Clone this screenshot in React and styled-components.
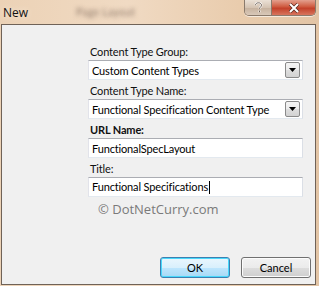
import React from "react";
import styled, { createGlobalStyle } from "styled-components";

const Global = createGlobalStyle`
  html, body { margin: 0; padding: 0; }
  body { font-family: Lato, "Noto Sans", sans-serif; background: #e8cdb0; }
`;

const Window = styled.div`
  width: 319px;
  height: 286px;
  box-sizing: border-box;
  display: flex;
  flex-direction: column;
  background: linear-gradient(90deg, #ecd2b6 0%, #f0dac3 40%, #e9ccad 75%, #e2c4a5 100%);
  padding: 0 3px 1px 1px;
`;

const TitleBar = styled.div`
  height: 24px;
  flex: none;
  display: flex;
  align-items: flex-start;
  position: relative;
`;

const Caption = styled.span`
  font-family: "Open Sans", sans-serif;
  font-size: 12px;
  color: #111;
  margin: 4px 0 0 2px;
  text-shadow: 0 0 6px rgba(255, 245, 230, 0.9);
`;

const Ghost = styled.span`
  font-size: 11px;
  margin: 5px 0 0 48px;
  color: transparent;
  text-shadow: 0 0 4px rgba(90, 70, 60, 0.6);
`;

const Controls = styled.div`
  position: absolute;
  top: 0;
  right: 0;
  display: flex;
  border: 1px solid #8a7a6c;
  border-top: none;
  border-radius: 0 0 5px 5px;
  overflow: hidden;
  box-shadow: 0 1px 0 rgba(255, 255, 255, 0.6);
`;

const CtrlButton = styled.div`
  width: ${({ w }) => w}px;
  height: 15px;
  display: flex;
  align-items: center;
  justify-content: center;
  background: ${({ danger }) =>
    danger
      ? "linear-gradient(180deg, #e3a08e 0%, #cf5a3f 45%, #c3412a 55%, #d7755d 100%)"
      : "linear-gradient(180deg, #ebe1d6 0%, #d5c4b3 50%, #c7b3a0 55%, #d9c8b8 100%)"};
  & + & {
    border-left: 1px solid #8a7a6c;
  }
`;

const Client = styled.div`
  flex: 1;
  border: 1px solid #6f6257;
  background: #f0f0f0;
  display: flex;
  flex-direction: column;
  padding: 19px 4px 6px 86px;
`;

const Form = styled.div`
  display: flex;
  flex-direction: column;
  width: 215px;
`;

const Label = styled.div`
  font-size: 11px;
  letter-spacing: -0.15px;
  color: #111;
  padding-left: 2px;
  height: 16px;
  line-height: 16px;
  font-weight: ${({ bold }) => (bold ? 700 : 400)};
`;

const Field = styled.div`
  height: 20px;
  box-sizing: border-box;
  border: 1px solid;
  border-color: #abadb3 #dbdfe6 #e3e9ef #e2e3ea;
  background: #fff;
  display: flex;
  align-items: center;
  padding: 0 2px 0 3px;
  font-size: 11px;
  letter-spacing: -0.15px;
  color: #000;
  margin-bottom: ${({ last }) => (last ? 0 : 3)}px;
`;

const FieldText = styled.span`
  flex: 1;
  white-space: nowrap;
`;

const Caret = styled.span`
  display: inline-block;
  width: 1px;
  height: 13px;
  background: #000;
  vertical-align: middle;
  margin-left: 1px;
`;

const DropButton = styled.div`
  width: 15px;
  height: 16px;
  box-sizing: border-box;
  border: 1px solid #8a8a8a;
  border-radius: 2px;
  background: linear-gradient(180deg, #f4f4f4 0%, #ececec 50%, #dedede 51%, #d2d2d2 100%);
  display: flex;
  align-items: center;
  justify-content: center;
`;

const Watermark = styled.div`
  font-size: 13px;
  color: #7a7a7a;
  margin: 3px 0 0 10px;
  font-family: "Open Sans", sans-serif;
`;

const Footer = styled.div`
  margin-top: auto;
  display: flex;
  justify-content: flex-end;
  gap: 11px;
  margin-left: -86px;
`;

const Button = styled.button`
  width: 70px;
  height: 21px;
  font-family: Lato, sans-serif;
  font-size: 11px;
  color: #000;
  padding: 0;
  border-radius: 3px;
  border: 1px solid ${({ primary }) => (primary ? "#3c7fb1" : "#707070")};
  background: ${({ primary }) =>
    primary
      ? "linear-gradient(180deg, #eaf6fd 0%, #d9f0fc 50%, #bee6fd 51%, #a7d9f5 100%)"
      : "linear-gradient(180deg, #f2f2f2 0%, #ebebeb 50%, #dddddd 51%, #cfcfcf 100%)"};
  box-shadow: inset 0 0 0 1px ${({ primary }) => (primary ? "#48d8fb" : "#fcfcfc")};
`;

const Arrow = () => (
  <svg width="7" height="4" viewBox="0 0 7 4">
    <path d="M0 0h7L3.5 4z" fill="#000" />
  </svg>
);

const Select = ({ children }) => (
  <Field>
    <FieldText>{children}</FieldText>
    <DropButton>
      <Arrow />
    </DropButton>
  </Field>
);

export default function App() {
  return (
    <>
      <Global />
      <Window>
        <TitleBar>
          <Caption>New</Caption>
          <Ghost>Page Layout</Ghost>
          <Controls>
            <CtrlButton w={26}>
              <svg width="9" height="11" viewBox="0 0 9 11">
                <path
                  d="M1.5 3.2C1.5 1.6 2.8 0.8 4.5 0.8s3 0.9 3 2.4c0 1.6-2 2-2 3.6M5.5 8.6v1.6"
                  stroke="#fff"
                  strokeWidth="2"
                  fill="none"
                />
                <path
                  d="M1.5 3.2C1.5 1.6 2.8 0.8 4.5 0.8s3 0.9 3 2.4c0 1.6-2 2-2 3.6M5.5 8.6v1.6"
                  stroke="#6d5f54"
                  strokeWidth="1"
                  fill="none"
                />
              </svg>
            </CtrlButton>
            <CtrlButton w={43} danger>
              <svg width="12" height="10" viewBox="0 0 12 10">
                <path d="M2 1l8 8M10 1L2 9" stroke="#5a2a20" strokeWidth="3.4" />
                <path d="M2 1l8 8M10 1L2 9" stroke="#fff" strokeWidth="2" />
              </svg>
            </CtrlButton>
          </Controls>
        </TitleBar>
        <Client>
          <Form>
            <Label>Content Type Group:</Label>
            <Select>Custom Content Types</Select>
            <Label>Content Type Name:</Label>
            <Select>Functional Specification Content Type</Select>
            <Label bold>URL Name:</Label>
            <Field>
              <FieldText>FunctionalSpecLayout</FieldText>
            </Field>
            <Label>Title:</Label>
            <Field last>
              <FieldText>
                Functional Specifications
                <Caret />
              </FieldText>
            </Field>
            <Watermark>© DotNetCurry.com</Watermark>
          </Form>
          <Footer>
            <Button primary>OK</Button>
            <Button>Cancel</Button>
          </Footer>
        </Client>
      </Window>
    </>
  );
}
